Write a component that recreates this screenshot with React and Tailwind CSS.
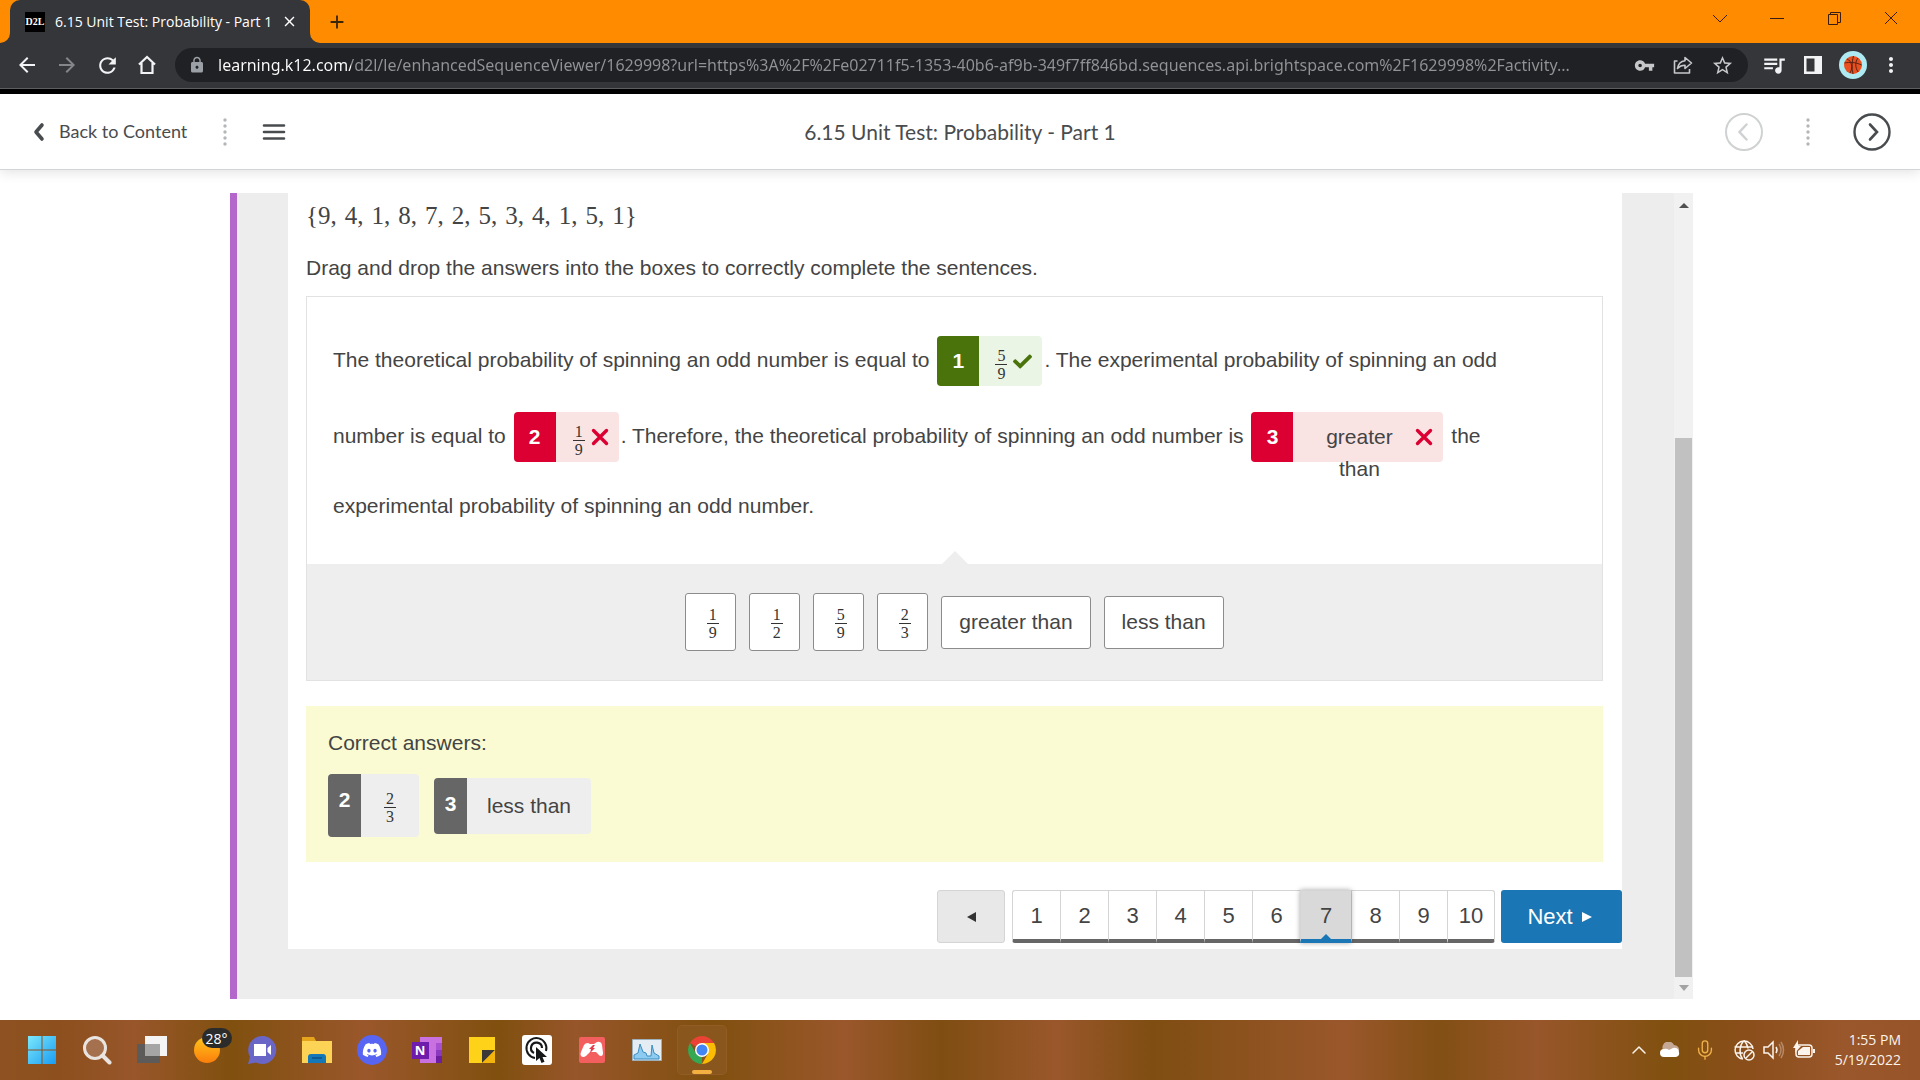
import React, { useState } from 'react';
import { MdArrowBack, MdArrowForward, MdRefresh, MdLock, MdVpnKey, MdStarBorder, MdQueueMusic, MdMoreVert, MdClose, MdAdd } from 'react-icons/md';
import { FaDiscord, FaCheck } from 'react-icons/fa';
import { ChevronUp, Mic } from 'lucide-react';

const pageUrl =
  'learning.k12.com/d2l/le/enhancedSequenceViewer/1629998?url=https%3A%2F%2Fe02711f5-1353-40b6-af9b-349f7ff846bd.sequences.api.brightspace.com%2F1629998%2Factivity...';

const spins = ['{9,', '4,', '1,', '8,', '7,', '2,', '5,', '3,', '4,', '1,', '5,', '1}'];

const options = [
  { id: 'a', top: '1', bottom: '9' },
  { id: 'b', top: '1', bottom: '2' },
  { id: 'c', top: '5', bottom: '9' },
  { id: 'd', top: '2', bottom: '3' },
  { id: 'e', text: 'greater than' },
  { id: 'f', text: 'less than' }
];

const Fraction = ({ top, bottom }) => (
  <span className="inline-flex flex-col items-center font-['Liberation_Serif',serif] text-[16px] leading-[17px] text-[#333]">
    <span>{top}</span>
    <span className="h-px w-3 bg-[#333]" />
    <span>{bottom}</span>
  </span>
);

const Cross = () => (
  <svg width="18" height="18" viewBox="0 0 18 18" fill="none" stroke="#dc0032" strokeWidth="3.4" strokeLinecap="round">
    <path d="M2.5 2.5l13 13M15.5 2.5l-13 13" />
  </svg>
);

const Response = ({ number, correct, children }) => (
  <span className={`mx-0.5 my-[13px] inline-flex h-[50px] items-center overflow-visible rounded align-middle leading-8 ${correct ? 'bg-[#eaf5e6]' : 'bg-[#fae3e3]'}`}>
    <span className={`flex h-full w-[42px] items-center justify-center rounded-l font-bold text-white ${correct ? 'bg-[#4a730b]' : 'bg-[#dc0032]'}`}>
      {number}
    </span>
    {children}
  </span>
);

const Dots = () => (
  <svg width="4" height="30" viewBox="0 0 4 30" fill="#b4b6b8">
    {[3, 9, 15, 21, 27].map((y) => <circle key={y} cx="2" cy={y} r="1.7" />)}
  </svg>
);

const BrowserBar = () => (
  <div className="font-['Open_Sans',sans-serif]">
    <div className="flex h-[43px] items-stretch justify-between bg-[#ff8c00]">
      <div className="flex items-center pl-[10px]">
        <div className="relative flex h-full w-[300px] items-center rounded-t-[10px] bg-[#35363a] pl-[15px] text-white">
          <svg className="absolute bottom-0 -left-[10px]" width="10" height="10" viewBox="0 0 10 10" fill="#35363a"><path d="M10 0v10H0A10 10 0 0 0 10 0z" /></svg>
          <svg className="absolute -right-[10px] bottom-0" width="10" height="10" viewBox="0 0 10 10" fill="#35363a"><path d="M0 0v10h10A10 10 0 0 1 0 0z" /></svg>
          <span className="flex size-5 items-center justify-center bg-black font-['Liberation_Serif',serif] text-[10px] font-bold">D2L</span>
          <span className="ml-[10px] w-[222px] overflow-hidden text-[14px] whitespace-nowrap">6.15 Unit Test: Probability - Part 1</span>
          <button aria-label="Close tab" className="ml-1"><MdClose size={17} /></button>
        </div>
        <button aria-label="New tab" className="ml-4 text-[#3c2408]"><MdAdd size={22} /></button>
      </div>
      <div className="flex items-start pt-[8px] pr-[19px] text-[#3a1c14]">
        <button aria-label="Search tabs" className="flex h-5 w-[58px] justify-end"><svg width="20" height="20" viewBox="0 0 20 20" fill="none" stroke="currentColor"><path d="M3 7l7 7 7-7" /></svg></button>
        <button aria-label="Minimize" className="flex h-5 w-[57px] justify-end"><svg width="20" height="20" viewBox="0 0 20 20" fill="none" stroke="currentColor"><path d="M3 10.500h14" /></svg></button>
        <button aria-label="Restore" className="flex h-5 w-[57px] justify-end"><svg width="20" height="20" viewBox="0 0 20 20" fill="none" stroke="currentColor"><path d="M4.500 6.500h9v10h-9zM6.500 6.500v-2h10v10h-3" /></svg></button>
        <button aria-label="Close" className="flex h-5 w-[57px] justify-end"><svg width="20" height="20" viewBox="0 0 20 20" fill="none" stroke="currentColor"><path d="M4 4l12 12M16 4L4 16" /></svg></button>
      </div>
    </div>
    <div className="flex h-[46px] items-center border-b border-[#5f6063] bg-[#35363a] pr-[17px] pb-px pl-[15px] text-[#f1f3f4]">
      <button aria-label="Back" className="w-10"><MdArrowBack size={24} /></button>
      <button aria-label="Forward" className="w-10 text-[#85868a]"><MdArrowForward size={24} /></button>
      <button aria-label="Reload" className="w-10"><MdRefresh size={25} /></button>
      <button aria-label="Home" className="w-10">
        <svg width="24" height="24" viewBox="0 0 24 24" fill="none" stroke="currentColor" strokeWidth="2.2"><path d="M4 11.500L12 4l8 7.500M6.500 10v10h11V10" /></svg>
      </button>
      <div className="flex h-[34px] min-w-0 flex-1 items-center rounded-full bg-[#202124] pr-[14px] pl-[13px] text-[#c6c8ca]">
        <MdLock size={18} className="shrink-0 text-[#9aa0a6]" />
        <input
          aria-label="Address"
          defaultValue={pageUrl}
          className="ml-[12px] min-w-0 flex-1 bg-[linear-gradient(90deg,#ffffff_133px,#919396_133px)] bg-clip-text font-['Noto_Sans',sans-serif] text-[16px] text-transparent outline-none"
        />
        <div className="ml-3 flex items-center gap-4">
          <button aria-label="Passwords"><MdVpnKey size={21} /></button>
          <button aria-label="Share">
            <svg width="24" height="24" viewBox="0 0 24 24" fill="none" stroke="currentColor" strokeWidth="1.600" strokeLinejoin="round"><path d="M6.500 8H3.500v12h15v-4M14 4.500l6.500 5.500-6.500 5.500v-3.200c-3.500 0-5.500 1-7.500 3.200.7-4.500 3-7.300 7.500-7.800z" /></svg>
          </button>
          <button aria-label="Bookmark"><MdStarBorder size={23} /></button>
        </div>
      </div>
      <div className="ml-[13px] flex items-center gap-4">
        <button aria-label="Media"><MdQueueMusic size={26} /></button>
        <button aria-label="Side panel"><svg width="20" height="20" viewBox="0 0 20 20"><path fill="currentColor" fillRule="evenodd" d="M1 1h18v18H1zM3.500 3.500v13h8v-13z" /></svg></button>
        <button aria-label="Profile">
          <svg width="28" height="28" viewBox="0 0 28 28"><circle cx="14" cy="14" r="14" fill="#aeeaf2" /><circle cx="14" cy="14" r="9" fill="#e8501f" /><path d="M5.500 12c5-1 11-1 17 2M14.500 5c-1.500 5-2 12-.5 18M8 8c5 2 6 9 3 14M19 7c-3 4-3 9 0 14" fill="none" stroke="#5c2314" /></svg>
        </button>
        <button aria-label="Menu" className="-ml-1"><MdMoreVert size={24} /></button>
      </div>
    </div>
    <div className="h-[5px] bg-black" />
  </div>
);

const CourseHeader = () => (
  <header className="relative z-10 grid h-[76px] grid-cols-[1fr_auto_1fr] items-center border-b border-[#d3d6d8] bg-white px-[29px] font-['Lato',sans-serif] text-[#494c4e] shadow-[0_2px_12px_rgba(0,0,0,0.12)]">
    <div className="flex items-center">
      <a href="#content" className="flex items-center gap-3 text-[18px]">
        <svg width="18" height="20" viewBox="0 0 18 20" fill="none" stroke="currentColor" strokeWidth="3.600" strokeLinecap="round" strokeLinejoin="round"><path d="M13 3L7 10l6 7" /></svg>
        Back to Content
      </a>
      <span className="mr-[35px] ml-[36px]"><Dots /></span>
      <button aria-label="Open navigation">
        <svg width="24" height="20" viewBox="0 0 24 20" stroke="currentColor" strokeWidth="2.600" strokeLinecap="round"><path d="M2 3.500h20M2 10h20M2 16.500h20" /></svg>
      </button>
    </div>
    <h1 className="text-[21px]">6.15 Unit Test: Probability - Part 1</h1>
    <div className="flex items-center justify-end gap-[43px]">
      <button aria-label="Previous activity" disabled className="text-[#cfd1d2]">
        <svg width="38" height="38" viewBox="0 0 38 38" fill="none" stroke="currentColor" strokeWidth="2"><circle cx="19" cy="19" r="18" /><path d="M21.500 11.500L14.500 19l7 7.500" strokeWidth="2.500" strokeLinecap="round" /></svg>
      </button>
      <Dots />
      <button aria-label="Next activity">
        <svg width="38" height="38" viewBox="0 0 38 38" fill="none" stroke="currentColor" strokeWidth="2.400"><circle cx="19" cy="19" r="17.500" /><path d="M17 11.500L24 19l-7 7.500" strokeWidth="2.600" strokeLinecap="round" /></svg>
      </button>
    </div>
  </header>
);

const Question = () => (
  <>
    <p className="flex gap-2 pt-2 font-['Liberation_Serif',serif] text-[25px] leading-[30px]">
      {spins.map((spin, i) => <span key={i}>{spin}</span>)}
    </p>
    <p className="mt-[22px] leading-[30px]">Drag and drop the answers into the boxes to correctly complete the sentences.</p>
    <div className="mt-[13px] border border-[#e2e2e2]">
      <p className="pt-[26px] pr-14 pb-[27px] pl-[26px] leading-[62px]">
        The theoretical probability of spinning an odd number is equal to{' '}
        <Response number={1} correct>
          <span className="flex w-[63px] items-center justify-end gap-[6px] pr-[10px]">
            <span className="flex pt-[6px]"><Fraction top="5" bottom="9" /></span>
            <FaCheck size={19} color="#4a730b" />
          </span>
        </Response>
        . The experimental probability of spinning an odd number is equal to{' '}
        <Response number={2}>
          <span className="flex w-[63px] items-center justify-end gap-[6px] pr-[10px]">
            <span className="flex pt-[6px]"><Fraction top="1" bottom="9" /></span>
            <Cross />
          </span>
        </Response>
        . Therefore, the theoretical probability of spinning an odd number is{' '}
        <Response number={3}>
          <span className="flex w-[150px] items-center justify-end gap-5 pr-[10px]">
            <span className="h-8 w-[72px] text-center">greater than</span>
            <Cross />
          </span>
        </Response>
        {' '}the experimental probability of spinning an odd number.
      </p>
      <div className="relative flex items-center justify-center gap-[13px] bg-[#eee] py-[29px]">
        <span className="absolute -top-[13px] left-1/2 -ml-[13px] border-x-[13px] border-b-[13px] border-x-transparent border-b-[#eee]" />
        {options.map((option) =>
          option.text ? (
            <button key={option.id} className="h-[53px] rounded-[3px] border border-[#8c8c8c] bg-white px-[17px]">{option.text}</button>
          ) : (
            <button key={option.id} className="flex h-[58px] w-[51px] items-center justify-center rounded-[3px] border border-[#8c8c8c] bg-white pt-[3px] pl-1">
              <Fraction top={option.top} bottom={option.bottom} />
            </button>
          )
        )}
      </div>
    </div>
  </>
);

const CorrectAnswers = () => (
  <section className="mt-[25px] bg-[#fafbd2] px-[22px] pt-[22px] pb-[25px]">
    <h2 className="leading-[30px]">Correct answers:</h2>
    <div className="mt-4 flex items-center gap-[15px]">
      <div className="flex h-[63px] overflow-hidden rounded bg-[#eee]">
        <span className="w-[33px] bg-[#666] pt-[11px] text-center leading-[30px] font-bold text-white">2</span>
        <span className="flex w-[58px] items-center justify-center pt-1"><Fraction top="2" bottom="3" /></span>
      </div>
      <div className="flex h-[56px] overflow-hidden rounded bg-[#eee]">
        <span className="w-[33px] bg-[#666] pt-[11px] text-center leading-[30px] font-bold text-white">3</span>
        <span className="flex items-center px-5">less than</span>
      </div>
    </div>
  </section>
);

const Pager = () => {
  const [current, setCurrent] = useState(7);
  const pages = [1, 2, 3, 4, 5, 6, 7, 8, 9, 10];

  return (
    <nav className="mt-7 flex h-[53px] justify-end text-[22px]">
      <button aria-label="Previous question" onClick={() => setCurrent(Math.max(1, current - 1))} className="mr-[7px] flex w-[68px] items-center justify-center rounded-[3px] border border-[#d4d4d4] bg-[#e8e8e8]">
        <svg width="9" height="10" viewBox="0 0 9 10" fill="#333"><path d="M9 0v10L0 5z" /></svg>
      </button>
      <div className="flex rounded-[3px]">
        {pages.map((page) => (
          <button
            key={page}
            onClick={() => setCurrent(page)}
            className={`relative border-t border-b-4 border-l border-t-[#d4d4d4] border-l-[#d4d4d4] last:rounded-r-[3px] last:border-r last:border-r-[#d4d4d4] first:rounded-l-[3px] ${
              page === current ? 'z-10 w-[51px] border-b-[#1a76b4] bg-[#d9d9d9] shadow-[0_0_5px_rgba(0,0,0,0.35)]' : 'w-12 border-b-[#666] bg-white'
            }`}
          >
            {page}
            {page === current && <span className="absolute bottom-0 left-1/2 -ml-[5px] border-x-[5px] border-b-[5px] border-x-transparent border-b-[#1a76b4]" />}
          </button>
        ))}
      </div>
      <button onClick={() => setCurrent(Math.min(10, current + 1))} className="ml-[6px] flex w-[121px] items-center justify-center gap-[9px] rounded-[3px] bg-[#1a76b4] pr-1 text-white">
        Next
        <svg width="10" height="10" viewBox="0 0 10 10" fill="currentColor"><path d="M0 0v10l10-5z" /></svg>
      </button>
    </nav>
  );
};

const taskbarApps = [
  {
    name: 'Start',
    icon: (
      <svg width="30" height="30" viewBox="0 0 30 30">
        <defs><linearGradient id="win" x2="1" y2="1" gradientUnits="objectBoundingBox"><stop stopColor="#7be8fb" /><stop offset="1" stopColor="#1a9cf2" /></linearGradient></defs>
        <path fill="url(#win)" d="M1 1h13.500v13.500H1zM15.500 1H29v13.500H15.500zM1 15.500h13.500V29H1zM15.500 15.500H29V29H15.500z" />
      </svg>
    )
  },
  { name: 'Search', icon: <svg width="30" height="30" viewBox="0 0 30 30" fill="#a5704d" stroke="#e9e4e0" strokeWidth="3"><circle cx="13" cy="13" r="10.500" /><path d="M20.500 20.500l7 7" strokeWidth="4" strokeLinecap="round" /></svg> },
  {
    name: 'Task View',
    icon: <svg width="30" height="30" viewBox="0 0 30 30"><path fill="#5c5b59" d="M0 9h23v19H0z" /><path fill="#f4f4f4" d="M8 1h22v20H8z" /><path fill="#a5a5a5" d="M8 9h15v12H8z" /></svg>
  },
  {
    name: 'Weather',
    icon: (
      <span className="relative block size-[30px]">
        <svg width="30" height="30" viewBox="0 0 30 30"><defs><linearGradient id="sun" x2="0" y2="1"><stop stopColor="#ffc61a" /><stop offset="1" stopColor="#fb7d0c" /></linearGradient></defs><circle cx="15" cy="15" r="13" fill="url(#sun)" /></svg>
        <span className="absolute -top-[7px] left-[10px] flex h-5 w-[30px] items-center justify-center rounded-full bg-[#2b2b2b] text-[14px] text-white">28°</span>
      </span>
    )
  },
  {
    name: 'Chat',
    icon: <svg width="30" height="30" viewBox="0 0 30 30"><path fill="#6a66c8" d="M15 1a14 14 0 1 1-6 26.500L1 29l2-7A14 14 0 0 1 15 1z" /><path fill="#fff" d="M7 9h12v12H7zM20.500 13l3.500-3v10l-3.500-3z" /></svg>
  },
  {
    name: 'File Explorer',
    icon: <svg width="32" height="30" viewBox="0 0 32 30"><path fill="#e5a41b" d="M1 2h12l2 4v3H1z" /><path fill="#fdd356" d="M1 6h30v22H1z" /><path fill="#1377b8" d="M7 28v-6q0-3 3-3h12q3 0 3 3v6z" /><path d="M11 23h10" stroke="#0c4f84" strokeWidth="1.500" /></svg>
  },
  {
    name: 'Discord',
    icon: <span className="flex size-[30px] items-center justify-center rounded-full bg-[#5765f2] text-white"><FaDiscord size={20} /></span>
  },
  {
    name: 'OneNote',
    icon: (
      <span className="relative block size-[30px]">
        <svg width="30" height="30" viewBox="0 0 30 30"><path fill="#c971e0" d="M8 2h22v26H8z" /><path fill="#a750d0" d="M24 8h6v7h-6z" /><path fill="#8b3ac0" d="M24 15h6v6h-6z" /><path fill="#6b1fa0" d="M24 21h6v7h-6z" /><path fill="#6d1cab" d="M0 7h17v17H0z" /></svg>
        <span className="absolute top-[7px] left-0 flex size-[17px] items-center justify-center text-[13px] font-bold text-white">N</span>
      </span>
    )
  },
  { name: 'Sticky Notes', icon: <svg width="26" height="26" viewBox="0 0 26 26"><path fill="#ffd21a" d="M0 0h26v13L13 26H0z" /><path fill="#3a3938" d="M13 13h13L13 26z" /><path fill="#f3b50b" d="M26 13v13H13z" /></svg> },
  {
    name: 'Auto Clicker',
    icon: <svg width="30" height="30" viewBox="0 0 30 30"><rect width="30" height="30" rx="3" fill="#fff" /><g fill="none" stroke="#16181a" strokeWidth="2"><path d="M13 23A10 10 0 1 1 24 16" /><path d="M12 18A5.500 5.500 0 1 1 20 13" strokeWidth="2.200" /></g><path fill="#16181a" d="M14 12v14l3.500-3 2 5 3-1.200-2-4.800H25z" /></svg>
  },
  {
    name: 'Gamepad',
    icon: <svg width="26" height="26" viewBox="0 0 26 26"><rect width="26" height="26" rx="2" fill="#f35f5f" /><path fill="#fff" d="M5 8q1-2 4-2l2 1h4l3-2q4-1 5 3l1 8q0 3-2 3-2 0-3-2l-2-2h-6l-4 4q-3 2-5 0-1-2 0-4z" /><path fill="#e33c4a" d="M14 8l-4 4h2l-1 4 5-5h-2l2-3z" /></svg>
  },
  {
    name: 'Resource Monitor',
    icon: <svg width="30" height="24" viewBox="0 0 30 24"><path fill="#e4edf3" stroke="#9eb0ba" d="M.5 1.500h29v21H.5z" /><path fill="#8dcbf0" stroke="#3b8cc1" d="M2 21v-4l4-2 2-9 3 8 3 1 1 3 4 0 1-11 2 8 5 3v3z" /></svg>
  },
  {
    name: 'Google Chrome',
    active: true,
    icon: (
      <svg width="28" height="28" viewBox="0 0 28 28">
        <path fill="#ea4335" d="M14 14L1.900 7A14 14 0 0 1 26.100 7z" />
        <path fill="#34a853" d="M14 14v14A14 14 0 0 1 1.900 7l6 10.500z" />
        <path fill="#fbbc04" d="M14 7h12.100A14 14 0 0 1 14 28l6-10.500z" />
        <circle cx="14" cy="14" r="7" fill="#fff" /><circle cx="14" cy="14" r="5.500" fill="#4285f4" />
      </svg>
    )
  }
];

const Taskbar = () => (
  <footer className="flex h-[60px] shrink-0 items-center justify-between bg-[linear-gradient(90deg,#8e5222,#8c4f1d_3%,#98562a_7%,#80500f_12%,#9a572b_19%,#80500f_26%,#97552a_30%,#80500f_37%,#9a572b_44%,#7f4d12_49%,#9a572b_55%,#7f4d12_60%,#9a572b_70%,#824f14_75%,#98562a_80%,#80500f_87%,#8a4e1b_91%,#9a572b_96%,#965428)] pr-[19px] pl-[14px] font-['Open_Sans',sans-serif]">
    <div className="flex items-center">
      {taskbarApps.map((app) => (
        <button key={app.name} aria-label={app.name} className="flex h-[60px] w-[55px] items-center justify-center">
          {app.active ? (
            <span className="relative flex size-[50px] items-center justify-center rounded-[5px] border border-[#925c24] bg-[#89561e]">
              {app.icon}
              <span className="absolute bottom-0 h-1 w-5 rounded-full bg-[#f5b042]" />
            </span>
          ) : app.icon}
        </button>
      ))}
    </div>
    <div className="flex items-center text-[#fbf3ec]">
      <ChevronUp size={24} strokeWidth={1.500} />
      <svg className="ml-[8px]" width="22" height="16" viewBox="0 0 22 16"><path fill="#c6a995" d="M4 8a6 6 0 0 1 11-5 5 5 0 0 1 5 6z" /><path fill="#fff" d="M5 15a4 4 0 0 1 0-8q3-1 5 1l4-2q5-1 6 4 1 4-3 5z" /></svg>
      <Mic size={22} strokeWidth={1.500} className="ml-[13px] text-[#f0b04a]" />
      <svg className="ml-[17px]" width="22" height="22" viewBox="0 0 22 22" fill="none" stroke="currentColor" strokeWidth="1.500">
        <path d="M10 20A9 9 0 1 1 20 10M1.500 8h18M2 14h8M11 1.500C6 7 6 15 9.500 20M11 1.500c2.500 2.500 3.600 5 4 8" /><circle cx="16" cy="16" r="5" /><path d="M13 19l6-6" />
      </svg>
      <svg className="ml-[8px]" width="22" height="20" viewBox="0 0 22 20" fill="none" stroke="currentColor" strokeWidth="1.500"><path d="M1 7h4l5-5v16l-5-5H1zM13 7q2 3 0 6" /><path d="M16 4q4 6 0 12M18 2q5 8 0 16" opacity=".35" /></svg>
      <svg className="ml-[8px]" width="22" height="20" viewBox="0 0 22 20" fill="none" stroke="currentColor" strokeWidth="1.500"><rect x="3" y="5" width="16" height="12" rx="3" /><path d="M21 9v4" strokeWidth="2" /><path fill="currentColor" stroke="none" d="M5 11l5-4h7v8H5zM5 0L0 8h3l-1 5 6-7H5z" /></svg>
      <div className="ml-[20px] text-right text-[14px] leading-5">
        <div>1:55 PM</div>
        <div>5/19/2022</div>
      </div>
    </div>
  </footer>
);

const App = () => {
  return (
    <div className="flex h-screen min-w-0 flex-col overflow-hidden bg-white">
      <BrowserBar />
      <CourseHeader />
      <main className="flex min-h-0 flex-1 justify-center pt-[23px] pb-[21px] pl-[3px]">
        <div className="flex w-full max-w-[1463px] border-l-[7px] border-[#b367cb] bg-[#ededed]">
          <div className="min-w-0 flex-1 overflow-hidden pr-[52px] pl-[51px] font-['Liberation_Sans',sans-serif] text-[21px] text-[#444]">
            <div className="bg-white pb-[6px] pl-[18px]">
              <div className="pr-[19px]">
                <Question />
                <CorrectAnswers />
              </div>
              <Pager />
            </div>
          </div>
          {/* Frame scrollbar */}
          <div className="flex w-[19px] flex-col items-center bg-[#f1f1f1]">
            <svg className="my-[9px]" width="10" height="6" viewBox="0 0 10 6" fill="#505050"><path d="M0 6l5-5 5 5z" /></svg>
            <div className="flex-[221]" />
            <div className="w-[17px] flex-[539] bg-[#c1c1c1]" />
            <svg className="my-[8px]" width="10" height="6" viewBox="0 0 10 6" fill="#a3a3a3"><path d="M0 0h10L5 6z" /></svg>
          </div>
        </div>
      </main>
      <Taskbar />
    </div>
  );
};

export default App;
